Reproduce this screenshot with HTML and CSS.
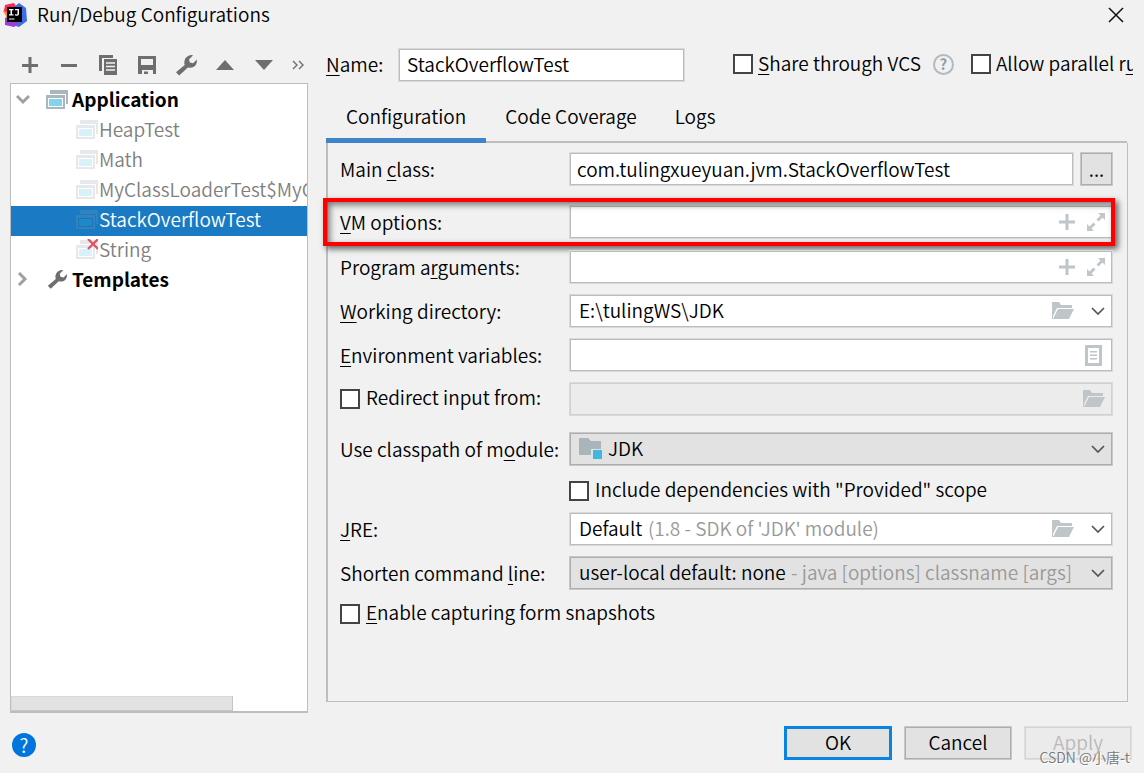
FILE: index.html
```html
<!DOCTYPE html>
<html lang="en">
<head>
<meta charset="utf-8">
<title>Run/Debug Configurations</title>
<link rel="stylesheet" href="styles.css">
</head>
<body>
<svg class="defs" aria-hidden="true">
  <symbol id="app" viewBox="0 0 22 20">
    <path d="M4 1h18v14h-2V5H4z" fill="#aab7bf"/>
    <path d="M0 6h19v14H0z" fill="#aab7bf"/><path d="M2 9h15v9H2z" fill="#fff"/><path d="M3 10h13v7H3z" fill="#85d2ec"/>
  </symbol>
  <symbol id="app-selected" viewBox="0 0 22 20">
    <path d="M4 1h18v14h-2V5H4z" fill="#3183bd"/>
    <path d="M0 6h19v14H0z" fill="#3183bd"/><path d="M2 9h15v9H2z" fill="#1a75b8"/><path d="M3 10h13v7H3z" fill="#2087c9"/>
  </symbol>
  <symbol id="wrench" viewBox="0 0 24 24">
    <path d="M2 19.3 10.700 12C9.600 8.200 11 4.600 14.200 2.900c1.600-.8 3.300-1 4.800-.6l-4 4.100.8 3.200 3.400.7 3.600-3.700c.5 3.100-.6 5.800-2.900 7.200-1.900 1.100-4.100 1.300-6 .6l-8.700 8.100z"/>
  </symbol>
  <symbol id="folder" viewBox="0 0 22 18">
    <path d="M0 0h7l2 3h11v3H5L1 14v3H0z"/><path d="M6 7h16l-5 10H1z"/>
  </symbol>
  <symbol id="plus" viewBox="0 0 16 16"><path d="M6.500 0h3v6.500H16v3H9.500V16h-3V9.500H0v-3h6.500z"/></symbol>
  <symbol id="expand" viewBox="0 0 18 18">
    <path d="M11 0h7v7l-2.500-2.500-4 4-2-2 4-4zM0 18v-7l2.500 2.500 4-4 2 2-4 4L7 18z"/>
  </symbol>
  <symbol id="chevron" viewBox="0 0 14 8"><path d="M1 1l6 6 6-6" fill="none" stroke="#555" stroke-width="1.700"/></symbol>
</svg>

<header class="titlebar">
  <svg class="logo" viewBox="0 0 24 24" aria-hidden="true">
    <path d="m0 8 3-3 4 3 1 8-6 2 1-5z" fill="#fb8a35"/>
    <path d="M2 2 11 0l3 5-6 6-7-3z" fill="#fe2857"/>
    <path d="m11 4 5-4 7 5 1 13-8 6-9-3z" fill="#3b6fe8"/>
    <path d="m2 15 5-1 9 7-5 3-9-2z" fill="#9b3fd1"/>
    <path d="M4 4h15v15H4z"/>
    <path d="M6 6h4.500v1.300H9v4h1.500v1.300H6v-1.300h1.500v-4H6zM12 6h4v5q0 1.800-2 1.800-1.400 0-2.200-.9l.9-1c1 1 1.800.6 1.800-.3V7.300H12zM6 15.500h5.500v1H6z" fill="#fff"/>
  </svg>
  <h1 class="title">Run/Debug Configurations</h1>
  <button class="plain close" aria-label="Close"><svg width="16" height="16" viewBox="0 0 16 16"><path d="m1 1 14 14M15 1 1 15" stroke="#111" stroke-width="1.500"/></svg></button>
</header>

<div class="content">
  <aside class="sidebar">
    <div class="toolbar">
      <button class="plain tool" aria-label="Add"><svg viewBox="0 0 24 24"><path d="M10.500 4h3v7H20v3h-6.500v6h-3v-6H4v-3h6.500z"/></svg></button>
      <button class="plain tool" aria-label="Remove"><svg viewBox="0 0 24 24"><path d="M4 11h16v3H4z"/></svg></button>
      <button class="plain tool" aria-label="Copy"><svg viewBox="0 0 24 24"><path d="M3 2h14v3H6v13H3z"/><path d="M8 6h13v16H8z"/><path d="M10 10h9M10 13.500h9M10 17h9" stroke="#f2f2f2" stroke-width="1.300"/></svg></button>
      <button class="plain tool" aria-label="Save"><svg viewBox="0 0 24 24"><path fill-rule="evenodd" d="M3 3h18v18h-3v-4H7v4H3zM6 6v6h12V6z"/><path d="M9 18.500h4V21H9z"/></svg></button>
      <button class="plain tool" aria-label="Edit templates"><svg viewBox="0 0 24 24"><use href="#wrench"/></svg></button>
      <button class="plain tool" aria-label="Move up"><svg viewBox="0 0 24 24"><path d="m12 7 9 10H3z"/></svg></button>
      <button class="plain tool" aria-label="Move down"><svg viewBox="0 0 24 24"><path d="m12 17 9-10H3z"/></svg></button>
      <button class="plain tool more" aria-label="More"><svg viewBox="0 0 14 24"><path d="m2 8 4 4-4 4M8 8l4 4-4 4" fill="none" stroke="#6e6e6e" stroke-width="1.400"/></svg></button>
    </div>
    <div class="tree">
      <ul class="nodes">
        <li class="node group"><svg class="arrow" viewBox="0 0 14 14"><path d="m1 4 6 6 6-6"/></svg><svg class="node-icon"><use href="#app"/></svg>Application</li>
        <li class="node child"><svg class="node-icon faded"><use href="#app"/></svg>HeapTest</li>
        <li class="node child"><svg class="node-icon faded"><use href="#app"/></svg>Math</li>
        <li class="node child"><svg class="node-icon faded"><use href="#app"/></svg>MyClassLoaderTest$MyClassLoader</li>
        <li class="node child selected"><svg class="node-icon"><use href="#app-selected"/></svg>StackOverflowTest</li>
        <li class="node child"><svg class="node-icon" viewBox="0 0 22 20"><use href="#app" opacity=".3"/><path d="m12 0 10 10M22 0 12 10" stroke="#e05565" stroke-width="2.300"/></svg>String</li>
        <li class="node group"><svg class="arrow" viewBox="0 0 14 14"><path d="m3 1 6 6-6 6"/></svg><svg class="node-icon wrench" fill="#6e6e6e"><use href="#wrench"/></svg>Templates</li>
      </ul>
      <div class="scrollbar"></div>
    </div>
  </aside>

  <main class="main">
    <div class="name-row">
      <label class="name-label" for="name"><u>N</u>ame:</label>
      <input class="field name-input" id="name" type="text" value="StackOverflowTest">
      <label class="check"><input type="checkbox"><span><u>S</u>hare through VCS</span></label>
      <button class="plain hint" aria-label="About sharing">?</button>
      <label class="check"><input type="checkbox"><span>Allow parallel r<u>u</u>n</span></label>
    </div>

    <nav class="tabs" role="tablist">
      <button class="plain tab active" role="tab" aria-selected="true">Configuration</button>
      <button class="plain tab" role="tab">Code Coverage</button>
      <button class="plain tab" role="tab">Logs</button>
    </nav>

    <form class="panel">
      <div class="row">
        <label for="main-class">Main <u>c</u>lass:</label>
        <input class="field" id="main-class" type="text" value="com.tulingxueyuan.jvm.StackOverflowTest">
        <button class="browse" type="button">...</button>
      </div>
      <div class="row highlighted">
        <label for="vm"><u>V</u>M options:</label>
        <div class="field"><input id="vm" type="text"><svg class="i-plus"><use href="#plus"/></svg><svg class="i-expand"><use href="#expand"/></svg></div>
      </div>
      <div class="row">
        <label for="args">Program a<u>r</u>guments:</label>
        <div class="field"><input id="args" type="text"><svg class="i-plus"><use href="#plus"/></svg><svg class="i-expand"><use href="#expand"/></svg></div>
      </div>
      <div class="row">
        <label for="dir"><u>W</u>orking directory:</label>
        <div class="field"><input id="dir" type="text" value="E:\tulingWS\JDK"><svg class="i-folder"><use href="#folder"/></svg><svg class="i-chevron"><use href="#chevron"/></svg></div>
      </div>
      <div class="row">
        <label for="env"><u>E</u>nvironment variables:</label>
        <div class="field"><input id="env" type="text"><svg class="i-list" viewBox="0 0 17 21"><path fill-rule="evenodd" d="M0 0h17v21H0zM3 3v15h11V3z"/><path d="M5 6h7v1.500H5zM5 9.500h7V11H5zM5 13h7v1.500H5z"/></svg></div>
      </div>
      <div class="row">
        <label class="check"><input type="checkbox"><span>Redirect input from:</span></label>
        <div class="field disabled"><input type="text" aria-label="Redirect input from" disabled><svg class="i-folder end"><use href="#folder"/></svg></div>
      </div>
      <div class="row module">
        <label for="module">Use classpath of m<u>o</u>dule:</label>
        <div class="field combo"><svg class="i-module" viewBox="0 0 24 22"><path d="M0 0h9l3 3h10v14H0z" fill="#a9b4bb"/><path d="M12 11h12v11H12z" fill="#e2e2e2"/><path d="M14 12h9v9h-9z" fill="#40b6e0"/></svg><select id="module"><option>JDK</option></select><svg class="i-chevron"><use href="#chevron"/></svg></div>
      </div>
      <div class="row include">
        <label class="check"><input type="checkbox"><span>Include dependencies with "Provided" scope</span></label>
      </div>
      <div class="row jre">
        <label for="jre"><u>J</u>RE:</label>
        <div class="field"><select id="jre"><option>Default</option></select><span class="note">(1.8 - SDK of 'JDK' module)</span><svg class="i-folder"><use href="#folder"/></svg><svg class="i-chevron"><use href="#chevron"/></svg></div>
      </div>
      <div class="row">
        <label for="shorten">Shorten command <u>l</u>ine:</label>
        <div class="field combo"><select id="shorten"><option>user-local default: none</option></select><span class="note">- java [options] classname [args]</span><svg class="i-chevron"><use href="#chevron"/></svg></div>
      </div>
      <div class="row snapshots">
        <label class="check"><input type="checkbox"><span><u>E</u>nable capturing form snapshots</span></label>
      </div>
    </form>
  </main>
</div>

<footer class="footer">
  <button class="plain help" aria-label="Help">?</button>
  <button class="button primary">OK</button>
  <button class="button">Cancel</button>
  <button class="button" disabled>Apply</button>
</footer>
<div class="watermark">CSDN @小唐-t</div>
</body>
</html>
```
FILE: styles.css
```css
* { box-sizing: border-box; }

body {
  margin: 0;
  min-height: 100vh;
  display: flex;
  flex-direction: column;
  position: relative;
  background: #f1f1f1;
  color: #000;
  font: 350 19px/24px "Noto Sans CJK SC", "Noto Sans", sans-serif;
}

button, input, select { font: inherit; color: inherit; }
u { text-decoration-thickness: 1px; text-underline-offset: 3px; }
.defs { position: absolute; width: 0; height: 0; }
.plain { padding: 0; border: 0; background: none; }

.titlebar { display: flex; align-items: center; height: 30px; padding: 0 20px 0 3px; }
.logo { width: 24px; height: 24px; margin-right: 10px; }
.title { flex: 1; margin: 0; padding-bottom: 2px; font-size: 19px; font-weight: 350; }
.close { display: flex; }

.content { flex: 1; display: flex; gap: 18px; padding: 0 11px 0 10px; }

.sidebar { width: 298px; flex: none; display: flex; flex-direction: column; padding-top: 23px; }
.toolbar { display: flex; gap: 15px; padding: 0 3px 6px 8px; }
.tool { flex: none; width: 24px; height: 24px; fill: #6e6e6e; }
.tool svg { display: block; width: 100%; height: 24px; }
.more { width: 14px; }

.tree {
  flex: 1;
  display: flex;
  flex-direction: column;
  justify-content: space-between;
  overflow: hidden;
  border: 1px solid #bdbdbd;
  border-bottom-width: 2px;
  background: #fff;
}
.nodes { list-style: none; margin: 0; padding: 2px 0 0; }
.node { display: flex; align-items: center; gap: 1px; height: 30px; padding-bottom: 4px; white-space: nowrap; color: #808080; }
.child { padding-left: 65px; }
.group { padding-left: 5px; gap: 4px; color: #000; font-weight: 700; }
.arrow { flex: none; width: 14px; height: 14px; margin-right: 12px; fill: none; stroke: #a0a0a0; stroke-width: 3; }
.node-icon { flex: none; width: 22px; height: 20px; }
.wrench { height: 22px; }
.faded { opacity: .3; }
.selected { background: #1a7bc4; color: #fff; }
.scrollbar { width: 75%; height: 15px; background: #e2e2e2; border: 1px solid #dadada; border-right-color: #c4c4c4; border-bottom-color: #c4c4c4; }

.main { flex: 1; min-width: 0; display: flex; flex-direction: column; padding-bottom: 11px; }
.name-row { display: flex; align-items: center; padding-top: 18px; overflow: hidden; white-space: nowrap; }
.name-label { width: 72px; flex: none; padding-bottom: 3px; }
.name-row .field { flex: none; width: 287px; margin-right: 48px; padding: 0 8px 3px; }
.check { display: flex; align-items: center; gap: 6px; line-height: 20px; white-space: nowrap; }
.check span { padding-bottom: 3px; }
.check input { appearance: none; flex: none; width: 20px; height: 20px; margin: 0; border: 2px solid #444; background: #fff; }
.name-row .check { gap: 5px; padding-bottom: 2px; }
.hint { flex: none; width: 21px; height: 21px; margin: 0 17px 2px 12px; border: 2px solid #b0bac1; border-radius: 50%; color: #929ca3; font-size: 15px; font-weight: 700; line-height: 16px; }

.tabs { display: flex; height: 61px; padding-top: 14px; margin-right: 6px; border-bottom: 2px solid #bdbfbf; }
.tab { height: 47px; padding: 0 19px 2px; border-bottom: 5px solid transparent; }
.active { padding: 0 20px 2px; border-color: #3f83c9; }

.panel { flex: 1; display: flex; flex-direction: column; gap: 10px; margin-right: 5px; padding: 9px 14px 20px 12px; border: 1px solid #bdbfbf; border-width: 0 1px 1px 2px; }
.row { display: grid; grid-template-columns: 229px 1fr auto; align-items: center; position: relative; }
.row > label { padding-bottom: 1px; }
.field { display: flex; align-items: center; min-width: 0; height: 34px; border: 1px solid #dadada; box-shadow: inset 0 0 0 1px #bcbcbc; background: #fff; padding: 0 7px 2px; border-radius: 0; }
div.field { grid-column: 2 / 4; padding: 0 7px 0 9px; }
.field input { flex: 1; min-width: 0; height: 32px; padding: 0 0 3px; border: 0; background: none; outline: 0; }
.field select { appearance: none; height: 32px; padding: 0 0 2px; border: 0; background: none; outline: 0; }
.field svg { flex: none; fill: #bfc6ca; }
.field.disabled { background: #ececec; box-shadow: inset 0 0 0 1px #d0d0d0; }
.combo, .browse, .button { background: #e2e2e2; border: 1px solid #c8c8c8; box-shadow: inset 0 0 0 1px #adadad; }
.note { margin-left: 5px; padding-bottom: 2px; color: #999; white-space: nowrap; }
.browse { width: 33px; height: 34px; margin-left: 6px; padding: 0; }
.i-plus { width: 16px; height: 16px; margin-right: 12px; }
.i-expand { width: 18px; height: 18px; }
.i-folder { width: 22px; height: 18px; margin-left: auto; margin-right: 17px; }
.i-folder.end { margin-right: 0; }
.i-chevron { width: 14px; height: 8px; margin-left: auto; }
.i-folder + .i-chevron { margin-left: 0; }
.i-list { width: 17px; height: 21px; margin-right: 3px; }
.i-module { width: 24px; height: 22px; margin-right: 5px; }

.highlighted { margin: 9px 0 1px; }
.highlighted::after {
  content: "";
  position: absolute;
  inset: -7px -2px -7px -17px;
  border: 4px solid #fe0000;
  box-shadow: 3px 3px 6px rgba(0, 0, 0, .6), inset 3px 3px 6px rgba(0, 0, 0, .5);
  pointer-events: none;
}
.module { margin-top: 6px; }
.include { margin-top: 3px; height: 20px; }
.include .check { grid-column: 2 / 4; }
.jre { margin-top: 3px; }
.snapshots { margin-top: 2px; height: 20px; }

.footer { display: flex; align-items: center; gap: 12px; padding: 13px 12px; }
.help { width: 24px; height: 24px; margin: 4px auto 0 0; border-radius: 50%; background: #0075dc; color: #fff; line-height: 24px; }
.button { width: 108px; height: 34px; padding: 0 0 3px; }
.primary { border: 3px solid #0a84e0; box-shadow: none; }
.button:disabled { color: #b9b9b9; border-color: #dedede; background: #ebebeb; box-shadow: inset 0 0 0 1px #d4d4d4; }
.watermark { position: absolute; right: 14px; bottom: 6px; color: #777; font-size: 14px; line-height: 20px; text-shadow: 1px 1px 0 #fff; }
```
